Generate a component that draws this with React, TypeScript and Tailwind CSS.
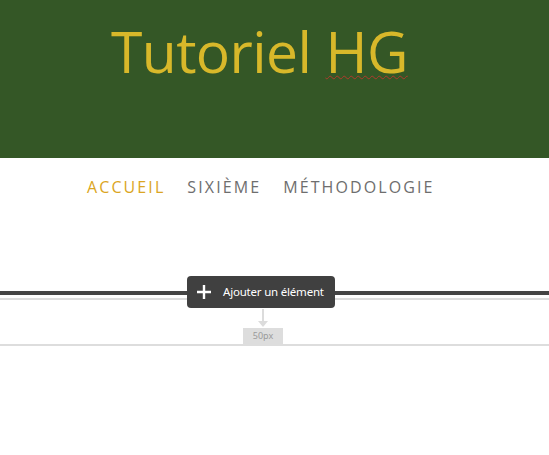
import React from "react";

export default function App() {
  return (
    <div className="w-[549px] h-[455px] bg-white overflow-hidden" style={{ fontFamily: '"Open Sans", sans-serif' }}>
      <header className="h-[158px] bg-[#345726] pl-[111px] pt-[12px]">
        <h1 className="text-[57px] leading-[78px] text-[#d8b82a] tracking-[-0.6px]">
          Tutoriel{" "}
          <span className="underline decoration-wavy decoration-[#b0392b] decoration-[1px] underline-offset-[2px]">HG</span>
        </h1>
      </header>
      <nav className="flex gap-[22px] pl-[87px] pt-[18px] text-[16px] leading-[22px] tracking-[2.1px]">
        <span className="text-[#dba522]">ACCUEIL</span>
        <span className="text-[#6e6e6e]">SIXIÈME</span>
        <span className="text-[#6e6e6e]">MÉTHODOLOGIE</span>
      </nav>
      <section className="relative mt-[93px]">
        <div className="h-[4px] bg-[#444444]" />
        <div className="mt-[3px] h-[2px] bg-[#dddddd]" />
        <div className="flex flex-col items-center w-[40px] ml-[243px] pt-[9px]">
          <svg width="12" height="19" viewBox="0 0 12 19">
            <path d="M6 0v13" stroke="#dcdcdc" strokeWidth="2" />
            <path d="M1 12h10l-5 6z" fill="#dcdcdc" />
          </svg>
          <div className="w-[40px] h-[16px] bg-[#dddddd] flex items-center justify-center text-[9px] text-[#9a9a9a]" style={{ fontFamily: '"Noto Sans", sans-serif' }}>
            50px
          </div>
        </div>
        <div className="h-[2px] bg-[#dddddd]" />
        <button className="absolute left-[187px] top-[-15px] w-[148px] h-[32px] rounded-[4px] bg-[#404040] flex items-center">
          <svg width="16" height="16" viewBox="0 0 16 16" className="ml-[9px]">
            <path d="M8 1v14M1 8h14" stroke="#ffffff" strokeWidth="2.4" />
          </svg>
          <span className="ml-[11px] text-[11.5px] text-white" style={{ fontFamily: '"Noto Sans", sans-serif', letterSpacing: "-0.2px" }}>Ajouter un élément</span>
        </button>
      </section>
    </div>
  );
}
